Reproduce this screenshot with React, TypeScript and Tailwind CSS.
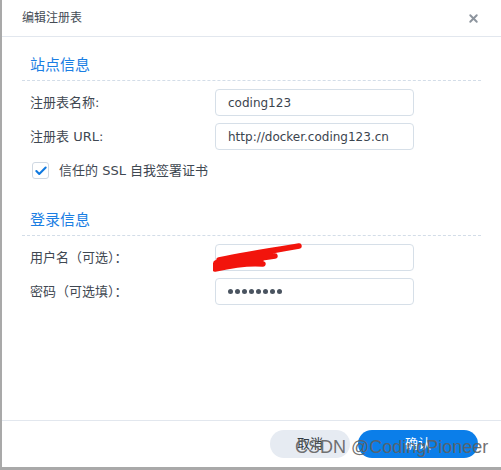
import { X, Check } from "lucide-react";

const cjk = "font-['DejaVu_Sans','Noto_Sans_CJK_SC',sans-serif]";

function SectionTitle({ text, className = "" }: { text: string; className?: string }) {
  return (
    <div className={`border-b border-dashed border-[#d3dde8] pl-[8px] pb-[5px] text-[15px] leading-[20px] text-[#1a7ee3] ${className}`}>
      {text}
    </div>
  );
}

function Field({ label, children, className = "" }: { label: string; children: React.ReactNode; className?: string }) {
  return (
    <div className={`flex items-center pl-[8px] ${className}`}>
      <div className="w-[185px] text-[13px] leading-[18px] text-[#3f4852]">{label}</div>
      <div className="relative flex h-[27px] w-[199px] items-center rounded-[4px] border border-[#d6dfe8] bg-white px-[12px] text-[12px] text-[#3b444e] whitespace-nowrap">
        {children}
      </div>
    </div>
  );
}

export default function App() {
  return (
    <div className={`relative flex h-[470px] w-[501px] flex-col bg-[#a9a9a9] pb-[3px] pl-[2px] ${cjk}`}>
      <div className="flex flex-1 flex-col bg-white">
        <div className="flex h-[37px] items-center justify-between border-b border-[#e2e7ee] pl-[20px] pr-[21px]">
          <span className="text-[12px] text-[#454c55]">编辑注册表</span>
          <X className="h-[13px] w-[13px] text-[#8c949d]" strokeWidth={3.5} />
        </div>

        <div className="flex-1 px-[20px]">
          <SectionTitle text="站点信息" className="mt-[18px]" />
          <Field label="注册表名称:" className="mt-[8px]">coding123</Field>
          <Field label="注册表 URL:" className="mt-[7px]">http://docker.coding123.cn</Field>
          <div className="mt-[12px] flex h-[17px] items-center pl-[10px]">
            <div className="flex h-[17px] w-[17px] items-center justify-center rounded-[3px] border border-[#cfd8e2] bg-white">
              <Check className="h-[14px] w-[14px] text-[#0f79e0]" strokeWidth={3.5} />
            </div>
            <span className="ml-[10px] text-[13px] leading-[17px] text-[#3f4852]">信任的 SSL 自我签署证书</span>
          </div>

          <SectionTitle text="登录信息" className="mt-[31px]" />
          <Field label="用户名（可选）：" className="mt-[8px]">
            <svg className="absolute left-[-3px] top-[-2px]" width="92" height="30" viewBox="0 0 92 30">
              <path
                d="M3 20 C 20 15, 45 10, 86 3 M4 24 C 25 19, 45 15, 62 13 M2 26 C 20 22, 40 20, 50 21 M6 17 C 30 12, 55 8, 80 4 M12 22 C 25 20, 40 17, 48 17 M2 22 C 15 20, 30 18, 44 19"
                stroke="#f2140c"
                strokeWidth="5.5"
                fill="none"
                strokeLinecap="round"
              />
            </svg>
          </Field>
          <Field label="密码（可选填）：" className="mt-[7px]">
            <div className="flex gap-[2px]">
              {Array.from({ length: 8 }).map((_, i) => (
                <span key={i} className="h-[5px] w-[5px] rounded-full bg-[#4a5460]" />
              ))}
            </div>
          </Field>
        </div>

        <div className="flex h-[47px] items-center justify-end gap-[8px] border-t border-[#e2e7ee] pr-[23px]">
          <button className="h-[28px] w-[80px] rounded-full bg-[#e6ebf2] text-[13px] text-[#333a42]">取消</button>
          <button className="h-[28px] w-[120px] rounded-full bg-[#0b7ee9] text-[13px] text-white">确认</button>
        </div>
      </div>

      <div className="absolute left-[295px] top-[434px] font-['Liberation_Sans',sans-serif] text-[18px] text-[#606060]/90">
        CSDN @CodingPioneer
      </div>
    </div>
  );
}
